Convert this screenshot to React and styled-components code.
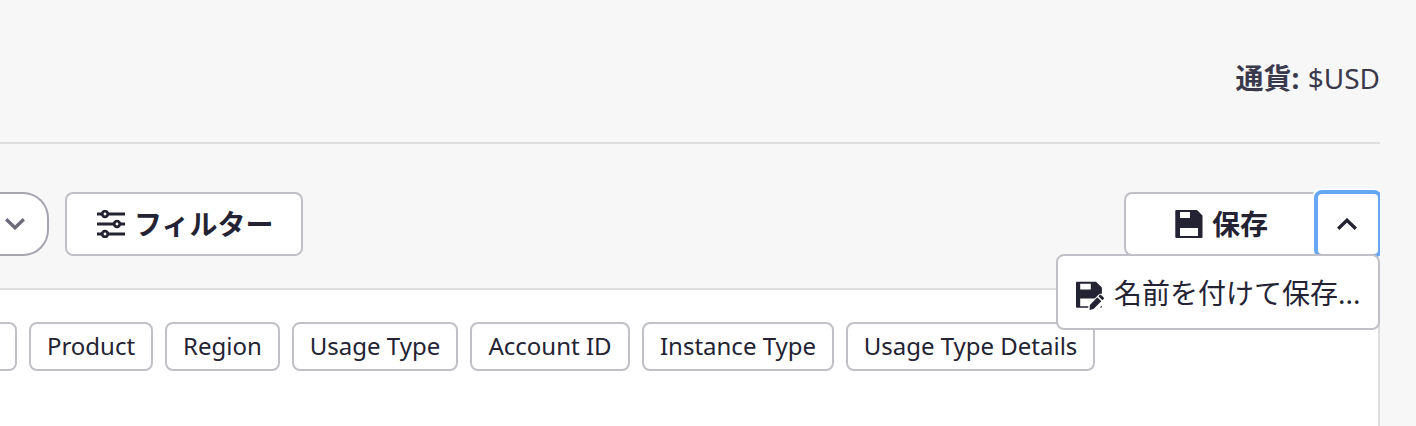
import React from "react";
import styled, { createGlobalStyle, css } from "styled-components";

const ink = "#232333";
const line = "#dedede";
const outline = "#c1c0c6";

const GlobalStyle = createGlobalStyle`
  *, *::before, *::after { box-sizing: border-box; }
  html, body { margin: 0; padding: 0; background: #f7f7f7; }
  body {
    overflow: hidden;
    color: ${ink};
    font-family: "Noto Sans", "Noto Sans CJK JP", sans-serif;
  }
`;

const Page = styled.main`
  width: 1380px;
  height: 426px;
  display: flex;
  flex-direction: column;
  overflow: hidden;
`;

const Header = styled.header`
  flex: none;
  height: 144px;
  padding-top: 58px;
  border-bottom: 2px solid ${line};
  color: #3a394c;
  font-size: 28px;
  line-height: 40px;
  text-align: right;
  white-space: nowrap;
`;

const HeaderLabel = styled.strong`
  margin-right: 1px;
`;

const Toolbar = styled.div`
  flex: none;
  height: 144px;
  padding-top: 48px;
  display: flex;
  align-items: flex-start;
  gap: 16px;
`;

const buttonBase = css`
  display: flex;
  align-items: center;
  height: 64px;
  margin: 0;
  background: #fff;
  border: 2px solid ${outline};
  color: ${ink};
  font: inherit;
  white-space: nowrap;
`;

const SelectPill = styled.button`
  ${buttonBase}
  width: 49px;
  padding: 0 0 0 5px;
  border-color: #a5a4af;
  border-left: 0;
  border-radius: 0 26px 26px 0;
`;

const Button = styled.button`
  ${buttonBase}
  gap: 9px;
  padding: 0 28px 0 30px;
  border-radius: 8px;
  font-size: 28px;
  font-weight: 700;
  line-height: 40px;
`;

const FilterButton = styled(Button)`
  width: 238px;
`;

const SaveGroup = styled.div`
  position: relative;
  display: flex;
  margin-left: auto;
`;

const SaveButton = styled(Button)`
  width: 192px;
  padding: 0 0 0 49px;
  border-right: 0;
  border-radius: 8px 0 0 8px;
`;

const CaretButton = styled.button`
  ${buttonBase}
  position: relative;
  width: 64px;
  padding: 0 2px 0 0;
  justify-content: center;
  border-color: #65a7f3;
  border-radius: 6px;
  outline: none;
  box-shadow: 0 0 0 2px #65a7f3, 0 0 0 4px #fff;
`;

const Menu = styled.div`
  position: absolute;
  z-index: 2;
  top: 62px;
  right: 0;
  width: 324px;
  height: 76px;
  padding: 2px 0 0 18px;
  display: flex;
  align-items: center;
  gap: 9px;
  background: #fff;
  border: 2px solid ${outline};
  border-radius: 8px;
  font-size: 28px;
  line-height: 40px;
  white-space: nowrap;
`;

const Panel = styled.section`
  flex: 1;
  padding-top: 32px;
  display: flex;
  align-items: flex-start;
  gap: 12px;
  background: #fff;
  border: solid ${line};
  border-width: 2px 2px 0 0;
`;

const Chip = styled.span`
  flex: none;
  width: ${(p) => p.$width}px;
  height: 49px;
  padding-bottom: 1px;
  display: flex;
  align-items: center;
  justify-content: center;
  border: 2px solid ${outline};
  border-left-width: ${(p) => (p.$cut ? 0 : 2)}px;
  border-radius: ${(p) => (p.$cut ? "0 8px 8px 0" : "8px")};
  font-size: 24px;
  line-height: 32px;
  white-space: nowrap;
`;

const Icon = styled.svg`
  flex: none;
  display: block;
`;

const MenuIcon = styled(Icon)`
  margin-top: 4px;
`;

const Chevron = ({ up, color }) => (
  <Icon width="20" height="12" viewBox="0 0 20 12" fill="none" stroke={color} strokeWidth="3.3">
    <path d={up ? "M1.2 10.8 10 2.2l8.8 8.6" : "M1.2 1.2 10 9.8l8.8-8.6"} />
  </Icon>
);

const SlidersIcon = () => (
  <Icon width="28" height="28" viewBox="0 0 28 28" fill="#fff" stroke={ink} strokeWidth="2.8">
    <path d="M0 4h28M0 14h28M0 24h28" />
    <circle cx="8" cy="4" r="2.8" />
    <circle cx="20" cy="14" r="2.8" />
    <circle cx="8" cy="24" r="2.8" />
  </Icon>
);

const SaveIcon = () => (
  <Icon width="28" height="28" viewBox="0 0 28 28" fill={ink}>
    <path
      fillRule="evenodd"
      d="M1 0h21l5.500 5.500V27a1 1 0 0 1-1 1H1.300a1 1 0 0 1-1-1V.7A.7.7 0 0 1 1 0ZM5 2v6h10V2ZM5 18v8h18v-8Z"
    />
  </Icon>
);

const SaveAsIcon = () => (
  <MenuIcon width="29" height="29" viewBox="0 0 29 29" fill={ink}>
    <path
      fillRule="evenodd"
      d="M1 .7h19l5.900 5.900v6.100c-1.700-.2-2.700.4-3.700 1.400L18.700 17.500H4.200V25.300H12.500L12.200 26.700H1a1 1 0 0 1-1-1v-24a1 1 0 0 1 1-1ZM4.200 2.700v5.800h10.600V2.700Z"
    />
    <path d="m21.300 16.200 4 4-7.800 7.800-3.900.9.300-5ZM22.400 15.200l1.300-1.200a1 1 0 0 1 1.400 0l2.600 2.600a1 1 0 0 1 0 1.400l-1.300 1.200ZM24.800 25.400l1-1v2h-2Z" />
  </MenuIcon>
);

const chips = [
  ["Product", 124],
  ["Region", 115],
  ["Usage Type", 166],
  ["Account ID", 160],
  ["Instance Type", 192],
  ["Usage Type Details", 249],
];

export default function App() {
  return (
    <>
      <GlobalStyle />
      <Page lang="ja">
        <Header>
          <HeaderLabel>通貨:</HeaderLabel> $USD
        </Header>
        <Toolbar>
          <SelectPill aria-label="選択">
            <Chevron color="#6b6a7b" />
          </SelectPill>
          <FilterButton>
            <SlidersIcon />
            フィルター
          </FilterButton>
          <SaveGroup>
            <SaveButton>
              <SaveIcon />
              保存
            </SaveButton>
            <CaretButton aria-label="メニュー" aria-expanded="true">
              <Chevron up color={ink} />
            </CaretButton>
            <Menu>
              <SaveAsIcon />
              名前を付けて保存...
            </Menu>
          </SaveGroup>
        </Toolbar>
        <Panel>
          <Chip $width={17} $cut />
          {chips.map(([label, width]) => (
            <Chip key={label} $width={width}>
              {label}
            </Chip>
          ))}
        </Panel>
      </Page>
    </>
  );
}
